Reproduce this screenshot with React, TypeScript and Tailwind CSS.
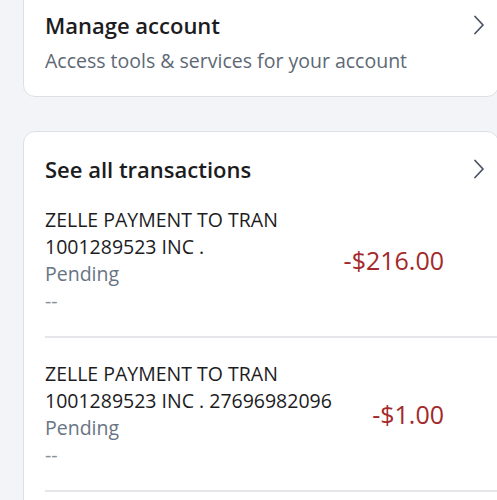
const transactions = [
    {
        name: "ZELLE PAYMENT TO TRAN",
        detail: "1001289523 INC .",
        status: "Pending",
        amount: "-$216.00",
    },
    {
        name: "ZELLE PAYMENT TO TRAN",
        detail: "1001289523 INC . 27696982096",
        status: "Pending",
        amount: "-$1.00",
    },
];

function Chevron() {
    return (
        <svg width="14" height="22" viewBox="0 0 14 22" fill="none" className="shrink-0 text-[#4b5563]">
            <path d="M3 2.5 L11 11 L3 19.5" stroke="currentColor" strokeWidth="1.8" strokeLinecap="round" strokeLinejoin="round" />
        </svg>
    );
}

export default function App() {
    return (
        <div className="h-[500px] overflow-hidden bg-[#f3f4f8] pl-[23px] font-['Open_Sans',sans-serif]">
            {/* Manage account */}
            <div className="-mt-[13px] -mr-[2px] rounded-[12px] border border-[#dcdfe5] bg-white pt-[22px] pb-[21px] pl-[21px] pr-[12px]">
                <div className="flex items-center justify-between">
                    <h2 className="text-[22px] leading-[30px] font-semibold text-[#1c1c1e]">Manage account</h2>
                    <Chevron />
                </div>
                <p className="mt-[7px] text-[19.5px] leading-[28px] text-[#5d6874]">
                    Access tools &amp; services for your account
                </p>
            </div>

            {/* Transactions */}
            <div className="mt-[34px] -mr-[2px] min-h-[400px] rounded-[12px] border border-[#dcdfe5] bg-white pl-[21px]">
                <div className="flex items-center justify-between pt-[22px] pr-[12px]">
                    <h2 className="text-[22px] leading-[30px] font-semibold text-[#1c1c1e]">See all transactions</h2>
                    <Chevron />
                </div>
                {transactions.map((t, i) => (
                    <div key={i} className="flex items-center justify-between border-b-2 border-[#e4e6ea] py-[22px] pr-[54px]">
                        <div className="text-[19.5px] leading-[27px]">
                            <div className="text-[#1c1c1e]">{t.name}</div>
                            <div className="text-[#1c1c1e]">{t.detail}</div>
                            <div className="text-[#697483]">{t.status}</div>
                            <div className="text-[#8a9099]">--</div>
                        </div>
                        <div className="text-[25px] leading-[32px] text-[#a3292b]">{t.amount}</div>
                    </div>
                ))}
            </div>
        </div>
    );
}
